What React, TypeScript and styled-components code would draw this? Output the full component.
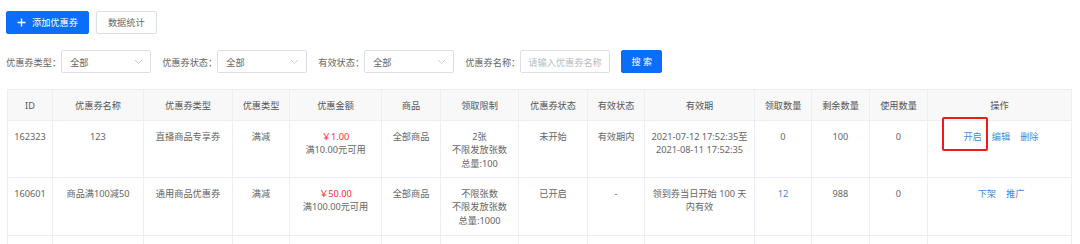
import React from "react";
import styled, { createGlobalStyle } from "styled-components";

const GlobalStyle = createGlobalStyle`
  html, body {
    margin: 0;
    padding: 0;
    background: #fff;
    font-family: "Noto Sans", "Noto Sans CJK SC", sans-serif;
    font-size: 9.2px;
    color: #666;
  }
`;

const Page = styled.div`
  box-sizing: border-box;
  height: 244px;
  overflow: hidden;
  padding: 11px 9px 0 6px;
`;

const Toolbar = styled.div`
  display: flex;
  gap: 7px;
  height: 23px;
`;

const Button = styled.button<{ $primary?: boolean; $w?: number }>`
  display: inline-flex;
  align-items: center;
  justify-content: center;
  gap: 6px;
  box-sizing: border-box;
  ${(p) => (p.$w ? `width: ${p.$w}px;` : "")}
  height: 23px;
  padding: 0 ${(p) => (p.$w ? "0" : p.$primary ? "10px" : "11px")};
  border-radius: 2px;
  border: 1px solid ${(p) => (p.$primary ? "#0a6efa" : "#dcdfe6")};
  background: ${(p) => (p.$primary ? "#0a6efa" : "#fff")};
  color: ${(p) => (p.$primary ? "#fff" : "#666")};
  font-family: inherit;
  font-size: 9.2px;
  line-height: 1;
  cursor: pointer;
`;

const Filters = styled.div`
  display: flex;
  align-items: center;
  margin-top: 16px;
  height: 23px;
`;

const Field = styled.div`
  display: flex;
  align-items: center;
  margin-right: 11px;
`;

const Label = styled.span`
  color: #666;
  white-space: nowrap;
`;

const Select = styled.div<{ $w: number }>`
  display: flex;
  align-items: center;
  justify-content: space-between;
  box-sizing: border-box;
  width: ${(p) => p.$w}px;
  height: 23px;
  padding: 0 7px 0 8px;
  border: 1px solid #dcdfe6;
  border-radius: 2px;
  color: #666;
`;

const Input = styled.div`
  display: flex;
  align-items: center;
  box-sizing: border-box;
  width: 90px;
  height: 23px;
  padding: 0 7px;
  border: 1px solid #dcdfe6;
  border-radius: 2px;
  color: #b8bcc4;
  white-space: nowrap;
  overflow: hidden;
`;

const Table = styled.table`
  margin-top: 16px;
  margin-left: 1px;
  border-collapse: collapse;
  table-layout: fixed;
  width: 1064px;
`;

const Col = styled.col<{ $w: number }>`
  width: ${(p) => p.$w}px;
`;

const Th = styled.th`
  height: 30px;
  padding: 0;
  background: #f8f8f9;
  border: 1px solid #ebeef5;
  color: #555;
  font-weight: normal;
  text-align: center;
`;

const Td = styled.td<{ $h?: number }>`
  height: ${(p) => p.$h ?? 57}px;
  box-sizing: border-box;
  padding: 9px 4px 0;
  border: 1px solid #ebeef5;
  vertical-align: top;
  text-align: center;
  line-height: 13.4px;
  color: #666;
  white-space: nowrap;
`;

const Price = styled.div`
  color: #ff2b2b;
`;

const Link = styled.span`
  position: relative;
  color: #3a8ee6;
  cursor: pointer;
`;

const Actions = styled.div`
  display: flex;
  justify-content: center;
  gap: 10px;
  padding-left: 3px;
`;

// red annotation frame drawn over the first action
const Highlight = styled.span`
  position: absolute;
  left: -21px;
  top: -13px;
  width: 46px;
  height: 34px;
  box-sizing: border-box;
  border: 2px solid #f0191c;
  border-radius: 2px;
`;

const Chevron = () => (
  <svg width="9" height="6" viewBox="0 0 9 6" fill="none">
    <path d="M1 1l3.5 3.5L8 1" stroke="#c0c4cc" strokeWidth="0.9" />
  </svg>
);

const Plus = () => (
  <svg width="9" height="9" viewBox="0 0 9 9">
    <path d="M4.5 0.5v8M0.5 4.5h8" stroke="#fff" strokeWidth="1.4" />
  </svg>
);

const widths = [45, 91, 89, 57, 92, 59, 78, 69, 57, 110, 57, 58, 58, 144];
const headers = [
  "ID",
  "优惠券名称",
  "优惠券类型",
  "优惠类型",
  "优惠金额",
  "商品",
  "领取限制",
  "优惠券状态",
  "有效状态",
  "有效期",
  "领取数量",
  "剩余数量",
  "使用数量",
  "操作",
];

export default function App() {
  return (
    <Page>
      <GlobalStyle />
      <Toolbar>
        <Button $primary>
          <Plus />
          添加优惠券
        </Button>
        <Button>数据统计</Button>
      </Toolbar>

      <Filters>
        <Field>
          <Label>优惠券类型：</Label>
          <Select $w={90}>
            全部
            <Chevron />
          </Select>
        </Field>
        <Field>
          <Label>优惠券状态：</Label>
          <Select $w={90}>
            全部
            <Chevron />
          </Select>
        </Field>
        <Field>
          <Label>有效状态：</Label>
          <Select $w={90}>
            全部
            <Chevron />
          </Select>
        </Field>
        <Field>
          <Label>优惠券名称：</Label>
          <Input>请输入优惠券名称</Input>
        </Field>
        <Button $primary $w={41}>
          搜 索
        </Button>
      </Filters>

      <Table>
        <colgroup>
          {widths.map((w, i) => (
            <Col key={i} $w={w} />
          ))}
        </colgroup>
        <thead>
          <tr>
            {headers.map((h) => (
              <Th key={h}>{h}</Th>
            ))}
          </tr>
        </thead>
        <tbody>
          <tr>
            <Td>162323</Td>
            <Td>123</Td>
            <Td>直播商品专享券</Td>
            <Td>满减</Td>
            <Td>
              <Price>￥1.00</Price>
              满10.00元可用
            </Td>
            <Td>全部商品</Td>
            <Td>
              2张
              <br />
              不限发放张数
              <br />
              总量:100
            </Td>
            <Td>未开始</Td>
            <Td>有效期内</Td>
            <Td>
              2021-07-12 17:52:35至
              <br />
              2021-08-11 17:52:35
            </Td>
            <Td>0</Td>
            <Td>100</Td>
            <Td>0</Td>
            <Td>
              <Actions>
                <Link>
                  <Highlight />
                  开启
                </Link>
                <Link>编辑</Link>
                <Link>删除</Link>
              </Actions>
            </Td>
          </tr>
          <tr>
            <Td $h={58}>160601</Td>
            <Td $h={58}>商品满100减50</Td>
            <Td $h={58}>通用商品优惠券</Td>
            <Td $h={58}>满减</Td>
            <Td $h={58}>
              <Price>￥50.00</Price>
              满100.00元可用
            </Td>
            <Td $h={58}>全部商品</Td>
            <Td $h={58}>
              不限张数
              <br />
              不限发放张数
              <br />
              总量:1000
            </Td>
            <Td $h={58}>已开启</Td>
            <Td $h={58}>-</Td>
            <Td $h={58}>
              领到券当日开始 100 天
              <br />
              内有效
            </Td>
            <Td $h={58}>
              <Link>12</Link>
            </Td>
            <Td $h={58}>988</Td>
            <Td $h={58}>0</Td>
            <Td $h={58}>
              <Actions>
                <Link>下架</Link>
                <Link>推广</Link>
              </Actions>
            </Td>
          </tr>
          <tr>
            {widths.map((_, i) => (
              <Td key={i} $h={40} />
            ))}
          </tr>
        </tbody>
      </Table>
    </Page>
  );
}
